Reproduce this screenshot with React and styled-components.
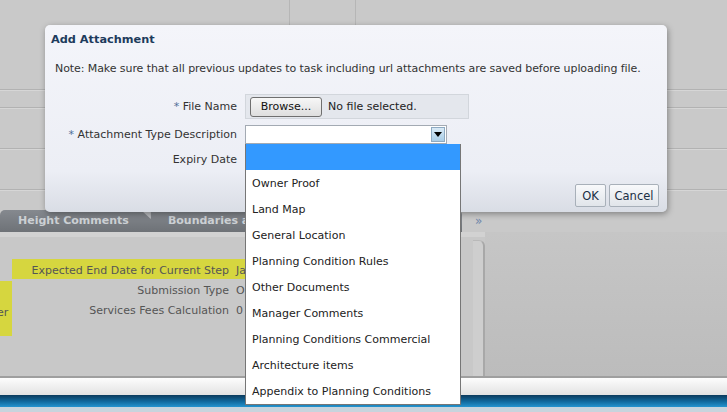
import React from 'react'
import styled, { createGlobalStyle } from 'styled-components'

const GlobalStyle = createGlobalStyle`
  html, body {
    margin: 0;
    padding: 0;
    background: #c9c9c9;
  }
  body {
    font-family: "DejaVu Sans", Verdana, sans-serif;
    font-size: 11px;
  }
`

const typeOptions = [
  '',
  'Owner Proof',
  'Land Map',
  'General Location',
  'Planning Condition Rules',
  'Other Documents',
  'Manager Comments',
  'Planning Conditions Commercial',
  'Architecture items',
  'Appendix to Planning Conditions',
]

function App() {
  return (
    <Page>
      <GlobalStyle />

      <Header>
        <TopRow>
          <TopCell $w="290px" />
          <TopCell $w="66px" />
          <TopCell />
        </TopRow>
        <RuleRow $h="16px" />
        <RuleRow $h="39px" />
        <RuleRow $h="39px" />
        <HeaderRest />
      </Header>

      <TabStrip>
        <Tabs>
          <Tab $pl="18px">Height Comments</Tab>
          <Notch />
          <Tab $pl="17px">Boundaries and Setbacks</Tab>
        </Tabs>
        <More>»</More>
      </TabStrip>

      <Body>
        <Panel>
          <PanelContent>
            <Fields>
              <PrevCol>
                <PrevCell $h="20px" />
                <PrevCell $h="55px" $hl>
                  <PrevText>er</PrevText>
                </PrevCell>
              </PrevCol>
              <FieldList>
                <FieldRow $hl>
                  <FieldLabel>Expected End Date for Current Step</FieldLabel>
                  <FieldValue>Jan 2015</FieldValue>
                </FieldRow>
                <FieldRow>
                  <FieldLabel>Submission Type</FieldLabel>
                  <FieldValue>Online</FieldValue>
                </FieldRow>
                <FieldRow>
                  <FieldLabel>Services Fees Calculation</FieldLabel>
                  <FieldValue>0</FieldValue>
                </FieldRow>
              </FieldList>
            </Fields>
          </PanelContent>
          <PanelEdge />
        </Panel>
        <RightFill />
      </Body>

      <Footer>
        <FooterRule />
        <FooterBand />
        <FooterBlue />
        <FooterStrip />
      </Footer>

      <Dialog>
        <DialogTitle>Add Attachment</DialogTitle>
        <Note>
          Note: Make sure that all previous updates to task including url attachments are saved before uploading file.
        </Note>

        <Form>
          <Label $h="25px">
            <Req>*</Req> File Name
          </Label>
          <FileBox>
            <BrowseButton>Browse...</BrowseButton>
            <span>No file selected.</span>
          </FileBox>

          <Label $h="19px">
            <Req>*</Req> Attachment Type Description
          </Label>
          <SelectWrap>
            <SelectBox>
              <SelectArrow>
                <svg width="8" height="5" viewBox="0 0 8 5">
                  <path d="M0 0 L8 0 L4 5 Z" fill="#000" />
                </svg>
              </SelectArrow>
            </SelectBox>
            <OptionList>
              {typeOptions.map((opt, i) => (
                <OptionItem key={i} $active={i === 0}>
                  {opt}
                </OptionItem>
              ))}
            </OptionList>
          </SelectWrap>

          <Label $h="19px">Expiry Date</Label>
          <div />
        </Form>

        <ButtonRow>
          <DlgButton $w="31px">OK</DlgButton>
          <DlgButton $w="50px">Cancel</DlgButton>
        </ButtonRow>
      </Dialog>
    </Page>
  )
}

export default App

const Page = styled.div`
  position: relative;
  width: 727px;
  height: 412px;
  overflow: hidden;
  display: flex;
  flex-direction: column;
  background: #c9c9c9;
`

/* ---------- background page ---------- */

const Header = styled.div`
  height: 210px;
  display: flex;
  flex-direction: column;
`

const TopRow = styled.div`
  height: 89px;
  display: flex;
  border-bottom: 1px solid #b2b2b2;
`

const TopCell = styled.div`
  width: ${p => p.$w || 'auto'};
  flex: ${p => (p.$w ? 'none' : '1')};
  border-right: ${p => (p.$w ? '1px solid #b6b6b6' : 'none')};
  box-sizing: border-box;
`

const RuleRow = styled.div`
  height: ${p => p.$h};
  border-top: 1px solid #d6d6d6;
  border-bottom: 1px solid #b2b2b2;
`

const HeaderRest = styled.div`
  flex: 1;
  border-top: 1px solid #d6d6d6;
`

const TabStrip = styled.div`
  height: 22px;
  display: flex;
`

const Tabs = styled.div`
  width: 462px;
  display: flex;
  align-items: flex-start;
  border-radius: 5px 5px 0 0;
  background: linear-gradient(to bottom, #85898f, #6e7277);
`

const Tab = styled.div`
  padding: 0 10px 0 ${p => p.$pl};
  line-height: 22px;
  font-weight: bold;
  color: #ccd0d4;
  white-space: nowrap;
`

const Notch = styled.div`
  width: 10px;
  height: 9px;
  margin-left: 2px;
  background: #b9bbbf;
  clip-path: polygon(0 0, 100% 0, 100% 100%);
`

const More = styled.div`
  margin-left: 13px;
  line-height: 22px;
  font-size: 12px;
  color: #6f86aa;
`

const Body = styled.div`
  height: 144px;
  display: flex;
`

const Panel = styled.div`
  width: 485px;
  display: flex;
  border-top: 5px solid #d2d2d2;
  background: #c8c8c8;
`

const PanelContent = styled.div`
  flex: 1;
  padding-top: 22px;
`

const PanelEdge = styled.div`
  width: 10px;
  margin-top: 3px;
  border-radius: 0 6px 0 0;
  border-top: 1px solid #b9b9b9;
  border-right: 2px solid #a8a8a8;
  background: #cecece;
`

const Fields = styled.div`
  display: flex;
`

const PrevCol = styled.div`
  width: 12px;
  display: flex;
  flex-direction: column;
`

const PrevCell = styled.div`
  height: ${p => p.$h};
  background: ${p => (p.$hl ? '#d6d63f' : 'transparent')};
  overflow: hidden;
  padding-top: 22px;
  box-sizing: border-box;
`

const PrevText = styled.div`
  line-height: 20px;
  color: #555;
  margin-left: -3px;
`

const FieldList = styled.div`
  width: 440px;
  display: flex;
  flex-direction: column;
`

const FieldRow = styled.div`
  height: 20px;
  box-sizing: border-box;
  padding-top: 3px;
  display: flex;
  align-items: center;
  background: ${p => (p.$hl ? '#d6d63f' : 'transparent')};
  color: #555;
  white-space: nowrap;
`

const FieldLabel = styled.div`
  width: 217px;
  text-align: right;
`

const FieldValue = styled.div`
  margin-left: 7px;
`

const RightFill = styled.div`
  flex: 1;
  background: linear-gradient(to bottom, #c6c6c6, #bcbcbc);
`

const Footer = styled.div`
  height: 36px;
  display: flex;
  flex-direction: column;
`

const FooterRule = styled.div`
  height: 2px;
  background: #9f9f9f;
`

const FooterBand = styled.div`
  height: 17px;
  background: linear-gradient(to bottom, #fdfdfd, #e2e2e2);
`

const FooterBlue = styled.div`
  height: 12px;
  background: linear-gradient(to bottom, #0b3a5c, #116a9e 55%, #2494cf);
`

const FooterStrip = styled.div`
  flex: 1;
  background: #c7d4dd;
`

/* ---------- dialog ---------- */

const Dialog = styled.div`
  position: absolute;
  left: 45px;
  top: 25px;
  width: 622px;
  height: 187px;
  box-sizing: border-box;
  padding: 7px 8px 5px 6px;
  border-radius: 5px;
  background: linear-gradient(to bottom, #f4f5fa 0%, #eceef5 78%, #d9dde5 100%);
  box-shadow: 1px 2px 6px rgba(0, 0, 0, 0.35);
  display: flex;
  flex-direction: column;
`

const DialogTitle = styled.div`
  font-size: 11.3px;
  font-weight: bold;
  line-height: 16px;
  color: #1d3b5c;
`

const Note = styled.div`
  margin-top: 13px;
  padding-left: 4px;
  line-height: 15px;
  letter-spacing: -0.08px;
  color: #333;
  white-space: nowrap;
`

const Form = styled.div`
  margin-top: 18px;
  display: grid;
  grid-template-columns: 186px 1fr;
  column-gap: 8px;
  row-gap: 6px;
`

const Label = styled.div`
  height: ${p => p.$h};
  display: flex;
  align-items: center;
  justify-content: flex-end;
  color: #333;
  white-space: pre;
`

const Req = styled.span`
  color: #4d6f96;
`

const FileBox = styled.div`
  width: 224px;
  height: 25px;
  box-sizing: border-box;
  display: flex;
  align-items: center;
  gap: 6px;
  padding-left: 4px;
  background: #e4e7ed;
  border: 1px solid #d2d6dc;
  color: #222;
`

const BrowseButton = styled.button`
  width: 72px;
  height: 20px;
  padding: 0;
  font-family: inherit;
  font-size: 11px;
  color: #111;
  border: 1px solid #6f6f6f;
  border-radius: 3px;
  background: linear-gradient(to bottom, #f7f7f7, #dedede);
`

const SelectWrap = styled.div`
  position: relative;
  width: 202px;
  height: 19px;
`

const SelectBox = styled.div`
  height: 19px;
  box-sizing: border-box;
  display: flex;
  justify-content: flex-end;
  padding: 1px;
  background: #fff;
  border: 1px solid #a3aab3;
`

const SelectArrow = styled.div`
  width: 14px;
  display: flex;
  align-items: center;
  justify-content: center;
  box-sizing: border-box;
  border: 1px solid #8eaac2;
  background: linear-gradient(to bottom, #d9eaf6, #a9cde7);
`

const OptionList = styled.div`
  position: absolute;
  left: 0;
  top: 100%;
  width: 216px;
  box-sizing: border-box;
  border: 1px solid #767676;
  border-top: none;
  background: #fff;
  z-index: 5;
`

const OptionItem = styled.div`
  height: 26px;
  box-sizing: border-box;
  padding: 2px 0 0 6px;
  line-height: 24px;
  color: #222;
  white-space: nowrap;
  background: ${p => (p.$active ? '#3399ff' : '#fff')};
`

const ButtonRow = styled.div`
  margin-top: auto;
  display: flex;
  justify-content: flex-end;
  gap: 3px;
`

const DlgButton = styled.button`
  width: ${p => p.$w};
  height: 23px;
  padding: 0;
  font-family: inherit;
  font-size: 11.5px;
  color: #1b2f45;
  border: 1px solid #a8b0b9;
  border-radius: 2px;
  background: linear-gradient(to bottom, #f8f9fb, #e1e5ea);
`
